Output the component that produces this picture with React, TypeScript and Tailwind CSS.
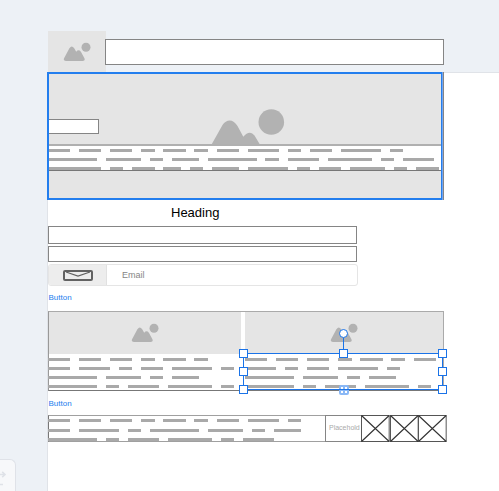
import React from "react";

const UNIT = 4.44;

/** Wireframe text: each number is the length of a word in characters. */
function TextLine({ words, className = "" }: { words: number[]; className?: string }) {
  return (
    <div className={"-ml-px flex h-[3px] shrink-0 gap-[8.88px] " + className}>
      {words.map((n, i) => (
        <span key={i} className="shrink-0 bg-[#a9a9a9]" style={{ width: n * UNIT }} />
      ))}
    </div>
  );
}

function Picture({ className }: { className: string }) {
  return (
    <svg viewBox="0 0 28 20" className={className} fill="#b2b2b2">
      <path d="M3 19Q-.2 19 1.2 16L6.4 6.3Q8.8 2.9 11.2 6.3L13.2 9.8Q15.5 6.9 17.9 9.8L21.3 16Q22.6 19 19.8 19Z" />
      <circle cx="23" cy="5.2" r="4.5" />
    </svg>
  );
}

function Crossed() {
  return (
    <svg viewBox="0 0 29 27" preserveAspectRatio="none" className="h-[27px] w-[28.67px] shrink-0" fill="none" stroke="#333">
      <rect x=".5" y=".5" width="28" height="26" stroke="#555" />
      <path d="M.5.5l28 26M28.5.5l-28 26" strokeWidth="1.15" />
    </svg>
  );
}

function Handle({ className }: { className: string }) {
  return <i className={"absolute size-[9px] border border-[#1a73e8] bg-white " + className} />;
}

function Selection() {
  return (
    <div className="pointer-events-none absolute top-[41px] left-[194px] h-[37px] w-[200px] border border-[#1a73e8]">
      <i className="absolute -top-[16px] left-[99px] h-[15px] w-px bg-[#1a73e8]" />
      <i className="absolute -top-[25px] left-[95px] size-[9px] rounded-full border border-[#1a73e8] bg-white" />
      <Handle className="-top-[5px] -left-[5px]" />
      <Handle className="-top-[5px] left-[95px]" />
      <Handle className="-top-[5px] left-[194px]" />
      <Handle className="top-[13px] -left-[5px]" />
      <Handle className="top-[13px] left-[194px]" />
      <Handle className="top-[31px] -left-[5px]" />
      <Handle className="top-[31px] left-[194px]" />
      <svg viewBox="0 0 10 10" className="absolute top-[31px] left-[95px] size-[10px]">
        <rect width="10" height="10" rx="2" fill="#8ab8f6" />
        <path d="M2 2h2v2H2zM6 2h2v2H6zM2 6h2v2H2zM6 6h2v2H6z" fill="#fff" />
        <path d="M0 4.5h10" stroke="#1a73e8" />
      </svg>
    </div>
  );
}

const intro = [
  [5, 5, 5, 3, 5, 3, 5, 7, 3, 5, 9, 3],
  [11, 8, 3, 6, 11, 3, 7, 10, 3, 7],
  [12, 3, 5, 4, 3, 6, 9, 3, 5, 8, 3, 5],
];
const leftCard = [
  [5, 5, 5, 3, 5, 3],
  [5, 7, 3, 5, 9, 3],
  [11, 8, 3, 6],
  [11, 3, 7, 10, 3],
];
const rightCard = [
  [5, 5, 5, 3, 5, 3, 5],
  [7, 3, 5, 9, 3],
  [11, 8, 3, 6],
  [11, 3, 7, 10, 3],
];

export default function App() {
  return (
    <div className="relative flex h-[491px] w-[499px] overflow-hidden bg-[#edf1f6] font-['Liberation_Sans',Arial,sans-serif]">
      <aside className="flex w-[47px] shrink-0 flex-col justify-end">
        <div className="h-[32px] w-[16px] rounded-tr-[6px] border-t border-r border-[#dfe2e8] bg-[#f7f8fa]">
          <svg viewBox="0 0 15 32" className="h-8 w-[15px]" fill="none" stroke="#dfe2e8" strokeWidth="1.6">
            <path d="M0 14.5h5M2.2 11.8l2.8 2.7-2.8 2.7M0 24.5h3" />
          </svg>
        </div>
      </aside>

      <main className="flex w-[452px] shrink-0 flex-col">
        <header className="flex h-[72px] shrink-0 pt-[31px] pl-px">
          <div className="h-[41px] w-[58px] shrink-0 bg-[#e5e5e5]">
            <Picture className="mt-[11px] ml-[15px] h-5 w-7" />
          </div>
          <div className="-ml-px mt-[8px] h-[26px] w-[339px] border border-[#858585] bg-white" />
        </header>

        <div className="flex grow flex-col border-t border-l border-[#e0e3e8] bg-white">
          <section className="-mt-px -ml-px flex h-[128px] w-[397px] shrink-0 border-r border-[#858585]">
            <div className="flex w-[396px] flex-col border-2 border-r-0 border-[#237eee] bg-[#e5e5e5]">
              <div className="relative h-[70px] shrink-0">
                <div className="mt-[45px] h-[15px] w-[50px] border border-l-0 border-[#858585] bg-white" />
                <svg viewBox="0 0 75 36" className="absolute top-[34px] left-[162px] h-9 w-[75px]" fill="#b2b2b2">
                  <path d="M0 37.5L11.5 17C15.5 10.7 22.5 10.7 26.5 18L32.3 28.7C36.5 23.5 40.5 23.5 43.5 27.5L49.5 37.5Z" />
                  <circle cx="60.3" cy="14" r="12.8" />
                </svg>
              </div>
              <div className="flex h-[27px] shrink-0 flex-col gap-[6px] overflow-hidden border-t-2 border-b border-t-[#b0b0b0] border-b-[#777] bg-white pt-[3px]">
                {intro.map((line, i) => (
                  <TextLine key={i} words={line} />
                ))}
              </div>
            </div>
            <div className="-ml-[2px] w-[2px] shrink-0 border-l border-[#237eee] bg-[#73a5f0]" />
          </section>

          <h1 className="h-[26px] shrink-0 pt-[5px] pl-[123px] text-[13px] leading-[15px] font-normal text-black">Heading</h1>
          <div className="h-[18px] w-[309px] shrink-0 border border-[#858585]" />
          <div className="mt-[2px] h-[16px] w-[309px] shrink-0 border border-[#858585]" />
          <div className="mt-[2px] flex h-[22px] w-[310px] shrink-0 items-center overflow-hidden rounded-[3px] border border-[#e5e5e5]">
            <div className="flex h-full w-[58px] shrink-0 items-center justify-center border-r border-[#e1e1e1] bg-[#ededed]">
              <svg viewBox="0 0 30 11" className="h-[11px] w-[30px]" fill="none" stroke="#626262">
                <rect x="1" y="1" width="28" height="9" rx="1" strokeWidth="2" fill="#ededed" />
                <path d="M3 2l12 4 12-4" strokeWidth="1.2" />
              </svg>
            </div>
            <span className="pl-[15px] text-[9px] leading-[11px] text-[#858585]">Email</span>
          </div>
          <div className="h-[25px] shrink-0 pt-[7px] pl-[.5px] text-[8px] leading-[10px] text-[#237eee]">Button</div>

          <section className="relative flex h-[80px] w-[396px] shrink-0 border border-[#aaa] border-b-[#777] border-l-[#999]">
            <div className="flex w-[192px] shrink-0 flex-col">
              <div className="h-[42px] bg-[#e5e5e5]">
                <Picture className="mt-[11px] ml-[81.5px] h-5 w-7" />
              </div>
              <div className="flex flex-col gap-[6px] pt-[4px]">
                {leftCard.map((line, i) => (
                  <TextLine key={i} words={line} />
                ))}
              </div>
            </div>
            <div className="ml-[4px] flex w-[198px] shrink-0 flex-col">
              <div className="h-[42px] bg-[#e5e5e5]">
                <Picture className="mt-[11px] ml-[84.5px] h-5 w-7" />
              </div>
              <div className="flex flex-col gap-[6px] pt-[4px] pl-px">
                {rightCard.map((line, i) => (
                  <TextLine key={i} words={line} />
                ))}
              </div>
            </div>
            <Selection />
          </section>
          <div className="h-[24px] shrink-0 pt-[8px] pl-[.5px] text-[8px] leading-[10px] text-[#237eee]">Button</div>

          <footer className="flex h-[27px] shrink-0">
            <div className="flex w-[277px] shrink-0 flex-col border border-r-0 border-[#a0a0a0] border-l-[#777] pt-[3px]">
              <TextLine words={[5, 5, 5, 3, 5, 3, 5, 7, 3]} />
              <TextLine words={[5, 9, 3, 11, 8, 3, 6]} className="mt-[7px]" />
              <TextLine words={[11, 3, 7, 10, 3, 7]} className="mt-[6px]" />
            </div>
            <div className="flex w-[36px] shrink-0 items-center overflow-hidden border border-r-0 border-[#858585] pl-[3px] text-[7px] text-[#aaa]">
              Placehold
            </div>
            <Crossed />
            <Crossed />
            <Crossed />
          </footer>
        </div>
      </main>
    </div>
  );
}
